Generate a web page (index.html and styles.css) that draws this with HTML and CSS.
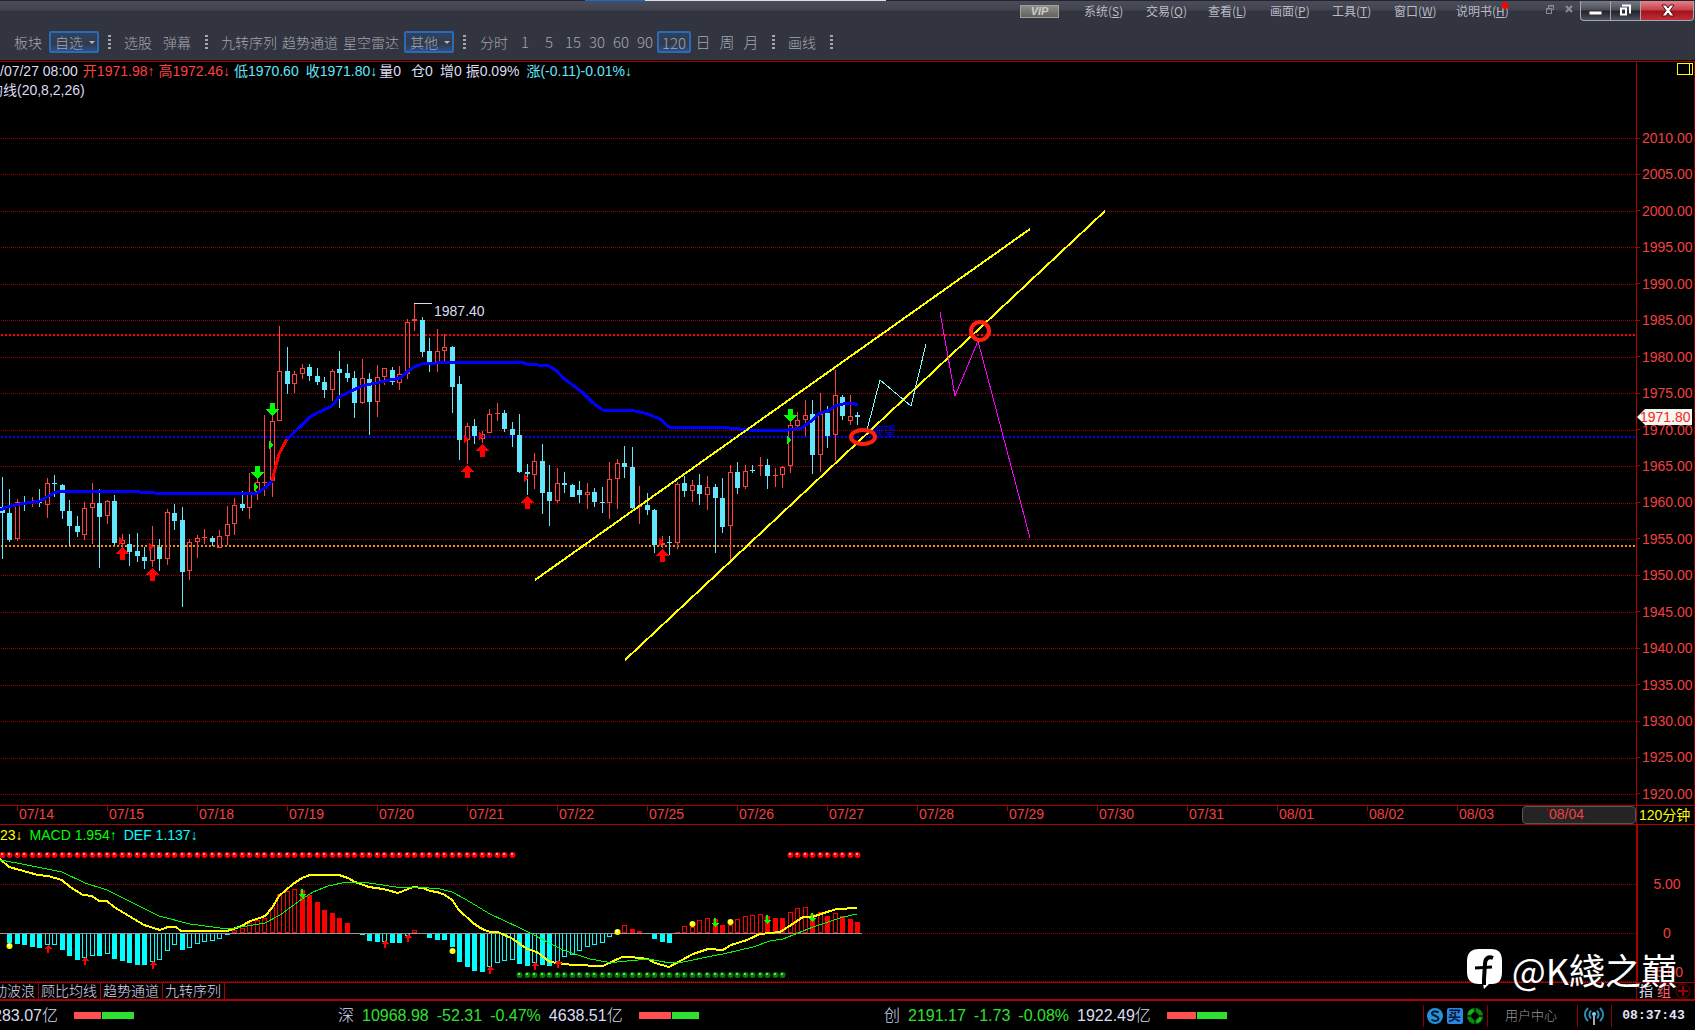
FILE: index.html
```html
<!DOCTYPE html>
<html lang="zh-CN">
<head>
<meta charset="utf-8">
<title>120分钟 K线</title>
<link rel="stylesheet" href="styles.css">
</head>
<body>
<header class="header">
  <div class="tab-strip"><span class="strip-active"></span><span class="strip-light"></span></div>
  <div class="title-bar">
    <button class="vip">VIP</button>
    <nav class="menu">
      <a href="#">系统(<u>S</u>)</a>
      <a href="#">交易(<u>Q</u>)</a>
      <a href="#">查看(<u>L</u>)</a>
      <a href="#">画面(<u>P</u>)</a>
      <a href="#">工具(<u>T</u>)</a>
      <a href="#">窗口(<u>W</u>)</a>
      <a href="#" class="manual">说明书(<u>H</u>)<i class="drop"></i></a>
    </nav>
    <div class="doc-controls">
      <button aria-label="还原文档"><svg width="8" height="9" viewBox="0 0 8 9"><path d="M2.5 3V.5h5v4H6M.5 3.5h5v5h-5z" fill="none" stroke="#8a8c95"/><path d="M2 1h6M0 4h6" stroke="#8a8c95"/></svg></button>
      <button aria-label="关闭文档"><svg width="8" height="8" viewBox="0 0 8 8"><path d="M1 1l6 6M7 1L1 7" stroke="#8a8c95" stroke-width="2"/></svg></button>
    </div>
    <div class="window-controls">
      <button aria-label="最小化"><svg width="29" height="19" viewBox="0 0 29 19"><rect x="8" y="10" width="13" height="4" fill="#fff" stroke="#333"/></svg></button>
      <button aria-label="还原"><svg width="29" height="19" viewBox="0 0 29 19"><path d="M11 4.500h8v8" fill="none" stroke="#fff" stroke-width="2"/><path d="M10 7.500h5v6h-5z" fill="none" stroke="#fff" stroke-width="2"/></svg></button>
      <button aria-label="关闭" class="close"><svg width="52" height="19" viewBox="0 0 52 19"><path d="M21 4h4l2 3 2-3h4l-4 5.500 4 5.500h-4l-2-3-2 3h-4l4-5.500z" fill="#fff" stroke="#501018"/></svg></button>
    </div>
  </div>
  <div class="toolbar">
    <button class="lead">板块</button>
    <button class="drop-button">自选</button>
    <i class="grip"></i>
    <button>选股</button>
    <button class="spaced">弹幕</button>
    <i class="grip"></i>
    <button class="tight">九转序列</button>
    <button class="tight">趋势通道</button>
    <button class="tight">星空雷达</button>
    <button class="drop-button">其他</button>
    <i class="grip"></i>
    <div class="periods">
      <button class="wide">分时</button><button>1</button><button>5</button><button>15</button><button>30</button><button>60</button><button>90</button><button class="selected">120</button><button>日</button><button>周</button><button>月</button>
    </div>
    <i class="grip"></i>
    <button class="spaced">画线</button>
    <i class="grip"></i>
  </div>
</header>

<main class="workspace">
  <section class="price-pane">
    <p class="quote"><span class="date">/07/27 08:00</span><span class="up">开1971.98↑</span><span class="up">高1972.46↓</span><span class="low">低1970.60</span><span class="down">收1971.80↓</span><span class="vol">量0</span><span class="pos">仓0</span><span>增0</span><span>振0.09%</span><span class="down">涨(-0.11)-0.01%↓</span></p>
    <p class="indicator">均线(20,8,2,26)</p>
    <svg class="chart" id="price" role="img" aria-label="K线图"></svg>
  </section>
  <aside class="price-axis">
    <button class="layout-toggle" aria-label="布局"></button>
    <ul class="scale">
      <li>2010.00</li><li>2005.00</li><li>2000.00</li><li>1995.00</li><li>1990.00</li><li>1985.00</li><li>1980.00</li><li>1975.00</li><li>1970.00</li><li>1965.00</li><li>1960.00</li><li>1955.00</li><li>1950.00</li><li>1945.00</li><li>1940.00</li><li>1935.00</li><li>1930.00</li><li>1925.00</li><li>1920.00</li>
    </ul>
    <span class="last-price">1971.80</span>
  </aside>

  <ol class="dates">
    <li>07/14</li><li>07/15</li><li>07/18</li><li>07/19</li><li>07/20</li><li>07/21</li><li>07/22</li><li>07/25</li><li>07/26</li><li>07/27</li><li>07/28</li><li>07/29</li><li>07/30</li><li>07/31</li><li>08/01</li><li>08/02</li><li>08/03</li><li class="current">08/04</li>
  </ol>
  <div class="period-name">120分钟</div>

  <section class="macd-pane">
    <p class="macd-values"><span class="dif">23↓</span><span class="macd">MACD 1.954↑</span><span class="def">DEF 1.137↓</span></p>
    <svg class="chart" id="macd" role="img" aria-label="MACD"></svg>
  </section>
  <aside class="macd-axis"><span>5.00</span><span>0</span><span>-5.00</span></aside>

  <nav class="tabs">
    <a href="#" class="first">动波浪</a><a href="#">顾比均线</a><a href="#">趋势通道</a><a href="#">九转序列</a>
  </nav>
  <div class="axis-tools"><button>指</button><button class="group">组</button><button aria-label="添加"><svg width="16" height="16" viewBox="0 0 16 16"><circle cx="8" cy="8" r="7" fill="none" stroke="#700"/><path d="M3 8h10M8 3v10" stroke="#900" stroke-width="2"/></svg></button></div>
</main>

<footer class="status">
  <div class="index sh"><span class="amount">283.07亿</span><span class="meter"><i style="width:27px"></i><i style="width:32px"></i></span></div>
  <div class="index sz"><span class="name">深</span><span>10968.98</span><span>-52.31</span><span>-0.47%</span><span class="amount">4638.51亿</span><span class="meter"><i style="width:32px"></i><i style="width:27px"></i></span></div>
  <div class="index cy"><span class="name">创</span><span>2191.17</span><span>-1.73</span><span>-0.08%</span><span class="amount">1922.49亿</span><span class="meter"><i style="width:29px"></i><i style="width:30px"></i></span></div>
  <div class="status-tools">
    <div class="cell shortcuts">
      <button aria-label="行情"><svg width="16" height="16" viewBox="0 0 16 16"><circle cx="8" cy="8" r="8" fill="#2593dc"/><path d="M11.500 4.500C10 2.800 5 3 5 5.500S11.500 7.500 11.500 10.500 6 13.500 4.500 11.500" fill="none" stroke="#05182c" stroke-width="2"/></svg></button>
      <button class="buy">买</button>
      <button aria-label="刷新"><svg width="16" height="16" viewBox="0 0 16 16"><circle cx="8" cy="8" r="8" fill="#0a8a10"/><path d="M1 5a8 8 0 0 1 4-4l2 2-4 4zM15 11a8 8 0 0 1-4 4l-2-2 4-4z" fill="#10b818"/><path d="M8 3l5 5-5 5-5-5z" fill="#000"/><path d="M8 0v3M16 8h-3M8 16v-3M0 8h3" stroke="#000"/></svg></button>
    </div>
    <a href="#" class="cell user">用户中心</a>
    <div class="cell signal"><svg width="20" height="20" viewBox="0 0 20 20" fill="none" stroke="#2f8fb8" stroke-width="2"><path d="M4 2C0 6 0 11 4 15M16 2c4 4 4 9 0 13M7 4.500C5 7 5 10 7 12.500M13 4.500c2 2.500 2 5.500 0 8"/><circle cx="10" cy="8" r="2" fill="#7fd0ee" stroke="none"/><path d="M10 10v9" stroke="#aab"/></svg></div>
    <time class="cell clock">08:37:43</time>
  </div>
</footer>
<div class="watermark">
  <svg width="36" height="40" viewBox="0 0 36 40"><path d="M12 0h12C32 0 35 4 35 12v11c0 8-3 12-10 12h-3l-5 5-1-5h-4C4 35 0 31 0 23V12C0 4 4 0 12 0z" fill="#fff"/><path d="M26 9c-5-2-8 1-8 6l-1 15v6" fill="none" stroke="#000" stroke-width="4"/><path d="M8 19l17-1" stroke="#000" stroke-width="3"/></svg>
  <span>@K綫之巔</span>
</div>
<script src="chart.js"></script>
</body>
</html>
```
FILE: styles.css
```css
* { box-sizing: border-box; }
body {
  margin: 0; min-height: 100vh; position: relative;
  display: flex; flex-direction: column; overflow-x: hidden;
  background: #000; color: #dcdcf0;
  font: 14px/18px "Liberation Sans", "Noto Sans CJK SC", sans-serif;
}
p, ul, ol { margin: 0; padding: 0; list-style: none; }
a { color: inherit; text-decoration: none; }
button { margin: 0; padding: 0; border: 0; background: none; color: inherit; font: inherit; white-space: nowrap; }
svg { display: block; }

/* Header */
.header { height: 62px; border-bottom: 1px solid #a00; background: linear-gradient(#4c4d59, #41434e 10px, #32353f 11px); box-shadow: inset 0 -1px #000; }
.tab-strip { display: flex; height: 1px; padding-left: 585px; background: #1b2534; }
.strip-active { width: 60px; background: #0a74d6; }
.strip-light { width: 241px; background: #ddd; }
.title-bar { display: flex; justify-content: flex-end; height: 22px; font: 12px/20px "Noto Sans CJK SC", sans-serif; color: #b9bac4; }
.vip { width: 39px; height: 13px; margin: 4px 25px 0 0; border: 1px solid #a09f9a; background: linear-gradient(#8b8b88, #62625f); color: #ccc; font: italic bold 11px/11px "Liberation Sans", sans-serif; }
.menu { display: flex; }
.menu a { width: 62px; white-space: nowrap; }
.menu .manual { position: relative; width: 90px; }
.drop { position: absolute; left: 46px; top: 1px; width: 6px; height: 7px; border-radius: 3px; background: #f00; }
.doc-controls { display: flex; align-items: flex-start; gap: 11px; padding: 4px 7px 0 0; }
.window-controls { display: flex; height: 20px; margin-right: 1px; border: 1px solid #a5a7ae; border-top: 0; border-radius: 0 0 4px 4px; background: linear-gradient(#777982, #4a4d57 9px, #20232c 10px, #4b4f59); }
.window-controls button + button { border-left: 1px solid #a5a7ae; }
.window-controls .close { background: linear-gradient(#e28288, #c8404a 9px, #a3101c 10px, #c03038); border-radius: 0 0 4px 0; }

.toolbar { display: flex; align-items: center; height: 22px; margin-top: 8px; padding-left: 14px; font: 14px/20px "Noto Sans CJK SC", sans-serif; font-weight: 300; color: #a3a6ae; }
.toolbar > button { margin-right: 11px; }
.toolbar .lead { margin-right: 7px; }
.toolbar .tight { margin-right: 5px; }
.toolbar .spaced { margin-right: 14px; }
.toolbar .drop-button, .periods .selected { border: 2px solid #2c6bb4; border-radius: 2px; background: linear-gradient(#2b4262, #323a49 60%, #29508c); height: 22px; line-height: 17px; }
.toolbar .drop-button { display: flex; align-items: center; gap: 6px; width: 50px; margin-right: 9px; padding-left: 4px; }
.drop-button::after { content: ""; border: 3px solid transparent; border-top-color: #b5b8bf; border-bottom: 0; }
.grip { width: 3px; height: 14px; margin-right: 13px; background: repeating-linear-gradient(#a3a6ae 0 2px, transparent 2px 4px); }
.periods { display: flex; margin-right: 9px; }
.periods button { width: 24px; font-size: 15px; }
.periods .wide { width: 30px; margin-right: 4px; font-size: 14px; }
.periods .selected { width: 34px; }

/* Chart panes */
.workspace { flex: 1; display: grid; grid-template-columns: minmax(0, 1fr) 58px; grid-template-rows: minmax(743px, 1fr) 20px 158px 16px; border-right: 1px solid #800; }
.price-pane, .macd-pane { display: flex; flex-direction: column; min-width: 0; overflow: hidden; }
.quote { display: flex; white-space: pre; }
.quote span { margin-right: 7px; }
.quote .date { margin-right: 5px; }
.quote .up { margin-right: 4px; color: #ff4040; }
.quote .low, .quote .down { color: #62e6fc; }
.quote .vol { margin: 0 10px 0 -5px; }
.quote span:nth-last-child(3) { margin-right: 4px; }
.indicator { height: 18px; line-height: 20px; text-indent: -11px; }
.chart { flex: 1; width: 100%; shape-rendering: crispEdges; }
.price-axis { position: relative; display: flex; flex-direction: column; border-left: 1px solid #a00; color: #f04040; }
.layout-toggle { align-self: flex-end; width: 16px; height: 12px; margin: 1px 1px 54px 0; border: 1px solid #ff0; background: linear-gradient(#ff0, #ff0) 11px 0 / 1px 100% no-repeat; }
.scale { flex: 1; display: flex; flex-direction: column; justify-content: space-between; padding-bottom: 2px; }
.scale li { display: flex; align-items: center; gap: 2px; }
.scale li::before { content: ""; width: 3px; height: 1px; background: #a00; }
.last-price { position: absolute; left: 0; top: 347px; width: 55px; height: 16px; padding-left: 3px; background: #f0f8f0; clip-path: polygon(0 8px, 8px 0, 100% 0, 100% 100%, 8px 100%); color: #f22; line-height: 16px; }

.dates { display: flex; min-width: 0; overflow: hidden; padding-left: 17px; border: solid #a00; border-width: 1px 0; color: #f04040; }
.dates li { flex: none; width: 90px; padding-left: 2px; line-height: 17px; background: linear-gradient(#a00, #a00) 0 0 / 1px 5px no-repeat; }
.dates .current { flex: 1 0 90px; margin-left: -25px; padding-left: 26px; border: 1px solid #555; border-radius: 4px; background: linear-gradient(#a00, #a00) 24px 0 / 1px 5px no-repeat #242424; line-height: 15px; }
.period-name { border: solid #a00; border-width: 1px 0 1px 1px; padding-left: 2px; color: #ff0; white-space: nowrap; line-height: 19px; overflow: hidden; }

.macd-pane { border-bottom: 1px solid #a00; }
.macd-values { display: flex; gap: 7px; line-height: 20px; }
.dif { color: #ff0; }
.macd { color: #0f0; }
.def { color: #0ff; }
.macd-axis { display: grid; grid-template-rows: 49px 49px 30px; padding: 34px 0 0 2px; align-items: center; justify-items: center; border-left: 2px solid #a00; border-bottom: 1px solid #a00; color: #f04040; }
.tabs { display: flex; overflow: hidden; line-height: 16px; font-weight: 300; }
.tabs a { width: 62px; padding-left: 2px; border-right: 1px solid #a00; white-space: nowrap; }
.tabs .first { width: 39px; padding: 0; text-indent: -7px; }
.axis-tools { display: flex; align-items: center; gap: 4px; padding-left: 2px; line-height: 16px; border-left: 1px solid #a00; }
.axis-tools .group { color: #ff6070; }

/* Status bar */
.status { display: flex; align-items: center; height: 31px; border-top: 2px solid #a00; font-size: 16px; line-height: 28px; color: #30e030; white-space: nowrap; overflow: hidden; }
.index { display: flex; align-items: center; gap: 8px; }
.index.sh { width: 345px; margin-left: -7px; }
.index.sz { width: 539px; }
.index.cy { width: 350px; padding-left: 7px; }
.index .name, .index .amount { color: #dcdcf0; font-weight: 300; }
.meter { display: flex; gap: 1px; margin-left: 8px; }
.meter i { height: 7px; background: #30e030; }
.meter i:first-child { background: #ff5050; }
.status-tools { display: flex; margin-left: auto; }
.cell { height: 22px; border-left: 1px solid #800; display: flex; align-items: center; justify-content: center; }
.shortcuts { width: 64px; padding-right: 2px; gap: 4px; }
.buy { width: 16px; height: 16px; border-radius: 2px; background: #2b86e8; color: #05182c; font-size: 13px; line-height: 15px; font-weight: bold; }
.user { width: 90px; padding-right: 3px; color: #9a9a9a; font-size: 13px; font-weight: 300; }
.signal { width: 34px; padding-right: 2px; }
.clock { width: 84px; color: #e4e4f8; font: bold 13px/22px "Liberation Mono", monospace; }

.watermark { position: absolute; right: 18px; bottom: 39px; display: flex; align-items: center; gap: 9px; color: #fff; font: 36px/44px "Noto Sans CJK TC", sans-serif; }
```
FILE: chart.js
```js
// Draws the candlestick pane and the MACD pane. Both panes share x positions,
// and their y values are measured from the top of the window.
const NS = 'http://www.w3.org/2000/svg';
const RED = '#ff4040', CYAN = '#62e6fc', GRID = '#990000';

function layer(id, top) {
  const g = document.createElementNS(NS, 'g');
  g.setAttribute('transform', `translate(0 ${-top})`);
  document.getElementById(id).append(g);
  return (tag, attrs, text) => {
    const el = document.createElementNS(NS, tag);
    for (const k in attrs) el.setAttribute(k, attrs[k]);
    if (text) el.textContent = text;
    g.append(el);
  };
}
const xAt = i => Math.floor(2 + 7.5 * i + (i > 94 ? 0.5 : 0));

// direction, high, body top, body bottom, low
const candles = `d477,507,513,559 d489,513,540,542 u499,502,539,541 d496,502,503,511 u497,502,503,507 d489,501,503,507
u478,483,505,518 d475,483,484,497 d484,485,511,519 d500,511,526,546 d516,526,532,537 u502,508,535,540
u483,503,508,544 d489,503,517,568 u500,501,516,524 d495,501,543,545 u534,540,544,547 d534,544,552,566
d533,551,556,562 d547,557,561,569 u526,546,561,567 d539,547,559,571 u509,512,559,565 d504,513,521,530
d507,520,572,607 u539,542,571,580 u535,538,542,558 u529,537,538,544 d536,538,542,546 u530,536,548,548
u506,524,536,545 u498,505,524,535 d491,504,508,511 u473,494,508,519 u479,482,492,500 u415,482,483,496
u415,421,481,497 u326,371,421,421 d347,371,384,394 u371,374,384,393 u364,368,374,379 d364,367,376,381
d368,376,382,385 d377,382,390,398 u369,371,390,401 d351,369,373,408 d364,373,378,382 d371,378,403,418
u359,378,403,404 d373,379,402,435 u365,377,402,417 u368,368,377,385 d367,370,382,385 u366,374,383,390
u319,322,374,379 u303,319,321,331 d317,320,352,357 d338,351,363,372 u329,351,363,372 u334,347,351,362
d346,347,387,413 d376,384,440,460 u423,426,440,464 d419,426,436,444 u431,434,439,443 u409,414,433,433
u403,413,414,421 d410,413,429,432 d422,429,435,447 d414,435,472,473 d464,472,474,495 u453,461,475,489
d444,461,493,514 d465,492,501,526 u468,483,501,503 d472,483,485,493 d484,485,497,497 d481,490,495,503
u483,492,495,509 d488,492,502,507 d487,502,503,513 u462,479,503,519 u459,463,479,509 d446,463,467,478
d447,467,508,509 u486,506,507,524 d493,505,510,515 d509,510,545,553 u536,543,545,548 d536,542,543,555
u482,484,543,549 d476,483,491,497 u480,485,491,502 d474,485,494,505 u476,487,495,510 d484,487,498,553
d478,498,527,533 u465,472,526,560 d462,472,488,494 u465,471,487,489 d465,470,471,473 u457,465,466,476
d459,465,476,489 u468,475,476,487 u466,467,475,488 u422,425,466,473 u412,420,426,428 u400,415,420,436
d400,414,455,474 u393,414,455,472 d406,413,436,448 u370,395,435,461 d395,397,416,420 u395,416,421,425
d412,415,417,425`.split(/\s+/);

const price = layer('price', 98);
for (let k = 0; k < 19; k++) {
  const y = Math.round(138 + 36.45 * k) + 0.5;
  price('line', { x1: 1, x2: '100%', y1: y, y2: y, stroke: GRID, 'stroke-dasharray': '1 1' });
}
[[335, '#f00'], [437, '#00f'], [546, '#ff8a00']].forEach(([y, c]) =>
  price('line', { x1: 1, x2: '100%', y1: y, y2: y, stroke: c, 'stroke-width': 2, 'stroke-dasharray': '2 2' }));

candles.forEach((c, i) => {
  const x = xAt(i), up = c[0] === 'u';
  const [h, t, b, l] = c.slice(1).split(',').map(Number);
  const color = up ? RED : CYAN;
  const wick = (a, z) => z > a && price('rect', { x, y: a, width: 1, height: z - a, fill: color });
  if (up && b - t > 2) {
    wick(h, t); wick(b, l);
    price('rect', { x: x - 1.5, y: t + 0.5, width: 4, height: b - t - 1, fill: 'none', stroke: color });
  } else {
    wick(h, l);
    price('rect', { x: x - 2, y: t, width: 5, height: Math.max(1, b - t), fill: color });
  }
});

const poly = (draw, points, stroke, width) =>
  draw('polyline', { points, fill: 'none', stroke, 'stroke-width': width, 'stroke-linejoin': 'round' });

poly(price, '0,510 7,507 20,504 40,501 54,493 60,491 125,491 155,493 257,493 265,488 272,481', '#00f', 3);
poly(price, '272,481 275,469 279,454 287,439', '#f00', 3);
poly(price, '287,439 300,427 310,417 317,413 332,406 339,397 362,386 385,381 400,378 407,372 414,367 422,364 450,362 520,362 527,364 549,366 557,371 563,378 570,383 582,392 593,403 603,410 635,411 648,414 660,419 669,427 718,427 740,429 750,430 788,430 802,428 810,422 820,413 828,411 835,406 843,404 852,403 858,405', '#00f', 3);

// Arrow markers, given by their tips
const upArrow = (draw, x, y, c) => draw('path', { d: `M${x} ${y}l7 6v1h-4v6h-5v-6h-4v-1z`, fill: c });
const downArrow = (draw, x, y, c) => draw('path', { d: `M${x} ${y}l7-6v-1h-4v-6h-5v6h-4v1z`, fill: c });
[[122, 547], [152, 568], [467, 465], [482, 444], [527, 496], [662, 549]].forEach(([x, y]) => upArrow(price, x, y, '#f00'));
[[257, 479], [272, 416], [790, 422]].forEach(([x, y]) => downArrow(price, x, y, '#0f0'));
const flag = (x, y, c) => price('path', { d: `M${x} ${y - 4}l4 4-4 4z`, fill: c });
[[119, 541], [149, 547], [464, 439], [479, 436], [524, 478], [659, 542]].forEach(([x, y]) => flag(x, y, '#f00'));
[[254, 487], [269, 445], [787, 440]].forEach(([x, y]) => flag(x, y, '#0f0'));

price('line', { x1: 414, x2: 432, y1: 303.5, y2: 303.5, stroke: '#dcdcf0' });
price('text', { x: 434, y: 316, fill: '#dcdcf0' }, '1987.40');

// Trend lines and projections
price('text', { x: 872, y: 436, fill: '#0000e0', 'font-size': 12 }, '观望');
poly(price, '535,580 1030,229', '#ff0', 2);
poly(price, '625,660 1105,211', '#ff0', 2);
poly(price, '867,430 880,380 911,406 926,344', '#7fffff', 1);
poly(price, '940,312 955,396 978,341 1030,538', '#f0f', 1);
price('ellipse', { cx: 863, cy: 437, rx: 12, ry: 7, fill: 'none', stroke: '#ff2010', 'stroke-width': 4, 'shape-rendering': 'auto' });
price('circle', { cx: 980, cy: 331, r: 9, fill: 'none', stroke: '#ff2010', 'stroke-width': 4, 'shape-rendering': 'auto' });

// Histogram: f = filled, h = hollow, - = empty; the number is the far end of the bar
const bars = `- f943 f944 f945 f947 f948 h945 h945 f950 f956 f960 h958 h956 f956 h954 f959 f961 f963 f965 f965
h962 h960 h951 h945 f950 h948 h944 h942 h941 h939 f935 h930 h928 h923 h920 h918 h907 h894 h891 h889
f890 f895 f902 f910 f913 f918 f923 - f935 f941 f942 h942 f943 f943 h936 h930 - f938 f940 f940
f947 f962 f967 f971 f972 h967 h963 h961 h960 f964 f966 h963 f965 f966 h962 h957 h955 h951 h947 h945
h943 h937 - h925 f929 f931 - f939 f942 f943 f932 h926 h927 h920 h918 f919 f925 h925 h919 h916
h915 h914 f916 f918 f918 h912 h908 h907 f914 h912 f916 h913 f916 f919 f922`.split(/\s+/);

const macd = layer('macd', 845);
[884.5, 933.5, 981.5].forEach(y =>
  macd('line', { x1: 1, x2: '100%', y1: y, y2: y, stroke: GRID, 'stroke-dasharray': '1 1' }));
bars.forEach((b, i) => {
  if (b === '-') return;
  const end = +b.slice(1), x = xAt(i), top = Math.min(end, 933), h = Math.abs(end - 933);
  const color = end > 933 ? '#00ffff' : '#ff0000';
  if (b[0] === 'h') macd('rect', { x: x - 1.5, y: top + 0.5, width: 4, height: h - 1, fill: 'none', stroke: color });
  else macd('rect', { x: x - 2, y: top, width: 5, height: h, fill: color });
});
macd('line', { x1: 0, x2: 862, y1: 933.5, y2: 933.5, stroke: '#999' });

poly(macd, '0,859 9,867 38,875 48,876 62,880 70,887 83,895 92,896 99,901 107,901 114,907 129,916 144,925 160,930 168,927 176,927 181,931 227,931 242,926 248,922 265,916 272,908 279,896 293,884 302,878 310,875 339,875 348,878 355,882 369,887 383,889 398,893 413,887 423,888 430,891 437,892 445,895 452,900 459,910 473,923 482,929 490,932 498,932 513,939 527,949 537,952 550,962 573,965 603,966 622,957 630,957 648,959 655,963 669,967 693,954 708,949 723,950 731,945 747,940 760,934 780,932 788,927 803,917 812,917 827,912 837,909 857,908', '#ff0', 2);
poly(macd, '0,860 17,863 62,872 85,883 107,890 129,901 159,916 190,924 220,928 235,928 265,923 280,915 302,899 313,892 328,886 347,882 362,882 403,888 417,887 440,889 452,892 465,899 490,914 520,928 563,950 590,959 607,962 617,962 648,959 670,963 683,962 717,955 723,954 753,947 770,941 783,939 813,927 843,917 857,914', '#0f0', 1);

const ball = (x, y, c, glint) => {
  macd('circle', { cx: x + 0.5, cy: y, r: 3, fill: c, 'shape-rendering': 'auto' });
  macd('rect', { x: x - 1, y: y - 2, width: 2, height: 2, fill: glint });
};
for (let i = 0; i < 115; i++) {
  if (i < 69 || i > 104) ball(xAt(i), 855, '#f00', '#f8a0a0');
  else ball(xAt(i), 975, '#008000', '#80c880');
}
[[9, 946], [452, 951], [617, 932], [692, 924], [730, 922]].forEach(([x, y]) => ball(x, y, '#ff0', '#fff'));
[[48, 945], [85, 957], [153, 961], [385, 940], [408, 934], [490, 966], [535, 962], [558, 960]].forEach(([x, y]) =>
  macd('path', { d: `M${x} ${y}l4 4h-3v4h-2v-4h-3z`, fill: '#f00' }));
[[302, 898], [715, 927], [767, 924], [812, 922]].forEach(([x, y]) =>
  macd('path', { d: `M${x} ${y}l4-4h-3v-5h-2v5h-3z`, fill: '#0f0' }));
```
